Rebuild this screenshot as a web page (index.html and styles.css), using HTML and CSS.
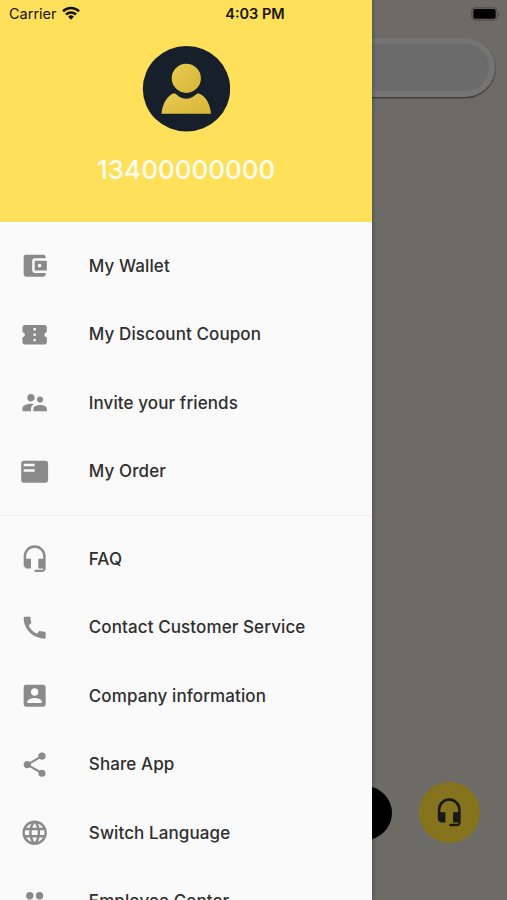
FILE: index.html
```html
<!DOCTYPE html>
<html lang="en">
<head>
  <meta charset="UTF-8" />
  <title>Menu</title>
  <link rel="stylesheet" href="styles.css">
</head>
<body>
<!-- Home screen behind the drawer -->
<main class="home">
  <div class="search"></div>
  <div class="actions">
    <div class="scan"></div>
    <div class="support">
      <svg viewBox="0 0 24 24"><path d="M12 1a9 9 0 0 0-9 9v7c0 1.66 1.34 3 3 3h3v-8H5v-2a7 7 0 0 1 14 0v2h-4v8h4v1h-6a1 1 0 0 0 0 2h5c1.66 0 3-1.34 3-3V10a9 9 0 0 0-9-9z"/></svg>
    </div>
  </div>
</main>

<aside class="drawer">
  <header class="profile">
    <svg class="avatar" viewBox="0 0 88 86">
      <defs>
        <linearGradient id="gold" x1="0" y1="0" x2="1" y2="1">
          <stop offset="0" stop-color="#e9cc50" />
          <stop offset="1" stop-color="#d6b538" />
        </linearGradient>
      </defs>
      <ellipse cx="44.5" cy="42.800" rx="43.700" ry="42.800" fill="#171f2b" />
      <circle cx="44.300" cy="32.300" r="14.600" fill="url(#gold)" />
      <path d="M19.500 67.800C20.500 57 26 48.500 32.500 47.300C35.500 49 38.500 52.800 44.300 52.800C49.500 52.800 53 49 56 47.300C63 49 68 57 69 67.800Z" fill="url(#gold)" />
    </svg>
    <div class="phone">13400000000</div>
  </header>

  <nav>
    <ul class="menu">
      <li><svg viewBox="0 0 24 24"><path d="M21 18v1c0 1.100-.9 2-2 2H5a2 2 0 0 1-2-2V5a2 2 0 0 1 2-2h14c1.100 0 2 .9 2 2v1h-9a2 2 0 0 0-2 2v8a2 2 0 0 0 2 2h9zm-9-2h10V8H12v8zm4-2.500a1.500 1.500 0 1 1 0-3 1.500 1.500 0 0 1 0 3z"/></svg><span>My Wallet</span></li>
      <li><svg viewBox="0 0 24 24"><path d="M22 10V6c0-1.110-.9-2-2-2H4c-1.100 0-1.990.890-1.990 2v4c1.100 0 1.990.9 1.990 2s-.890 2-2 2v4c0 1.100.9 2 2 2h16c1.100 0 2-.9 2-2v-4c-1.100 0-2-.9-2-2s.9-2 2-2zm-9 7.500h-2v-2h2v2zm0-4.500h-2v-2h2v2zm0-4.500h-2v-2h2v2z"/></svg><span>My Discount Coupon</span></li>
      <li><svg viewBox="0 0 24 24"><path d="M16.500 12c1.380 0 2.490-1.120 2.490-2.500S17.880 7 16.500 7a2.500 2.500 0 0 0 0 5zM9 11c1.660 0 2.990-1.340 2.990-3S10.660 5 9 5a3 3 0 0 0 0 6zm7.500 3c-1.830 0-5.500.920-5.500 2.750V19h11v-2.250c0-1.830-3.670-2.750-5.500-2.750zM9 13c-2.330 0-7 1.170-7 3.500V19h7v-2.250c0-.850.330-2.340 2.370-3.470C10.500 13.100 9.660 13 9 13z"/></svg><span>Invite your friends</span></li>
      <li><svg viewBox="0 0 24 24"><path d="M21 3H3c-1.100 0-2 .9-2 2v14c0 1.100.9 2 2 2h18c1.100 0 2-.9 2-2V5c0-1.100-.9-2-2-2zm-9 9H3v-2h9v2zm0-4.500H3v-2h9v2z"/></svg><span>My Order</span></li>
    </ul>
    <hr>
    <ul class="menu">
      <li><svg viewBox="0 0 24 24"><path d="M12 1a9 9 0 0 0-9 9v7c0 1.660 1.340 3 3 3h3v-8H5v-2a7 7 0 0 1 14 0v2h-4v8h4v1h-7v2h6c1.660 0 3-1.340 3-3V10a9 9 0 0 0-9-9z"/></svg><span>FAQ</span></li>
      <li><svg viewBox="0 0 24 24"><path d="M20.010 15.380c-1.230 0-2.420-.2-3.530-.560-.350-.120-.740-.030-1.010.240l-1.570 1.970c-2.830-1.350-5.480-3.900-6.890-6.830l1.950-1.660c.270-.280.350-.670.240-1.020-.370-1.110-.560-2.300-.560-3.530 0-.540-.450-.990-.990-.990H4.190C3.650 3 3 3.240 3 3.990 3 13.280 10.730 21 20.010 21c.710 0 .990-.630.990-1.180v-3.450c0-.540-.450-.990-.990-.990z"/></svg><span>Contact Customer Service</span></li>
      <li><svg viewBox="0 0 24 24"><path d="M3 5v14a2 2 0 0 0 2 2h14c1.100 0 2-.9 2-2V5c0-1.100-.9-2-2-2H5a2 2 0 0 0-2 2zm12 4a3 3 0 1 1-6 0 3 3 0 0 1 6 0zm-9 8c0-2 4-3.100 6-3.100s6 1.100 6 3.100v1H6v-1z"/></svg><span>Company information</span></li>
      <li><svg viewBox="0 0 24 24"><path d="M18 16.080c-.760 0-1.440.3-1.960.770L8.910 12.700c.050-.230.090-.460.090-.7s-.040-.470-.090-.7l7.050-4.110c.540.5 1.250.810 2.040.810a3 3 0 1 0-3-3c0 .240.040.470.090.7L8.040 9.810A3 3 0 1 0 6 15c.790 0 1.500-.310 2.040-.810l7.120 4.160c-.050.210-.080.430-.080.650a2.920 2.920 0 1 0 2.920-2.920z"/></svg><span>Share App</span></li>
      <li><svg viewBox="0 0 24 24"><path d="M11.990 2C6.470 2 2 6.480 2 12s4.470 10 9.990 10C17.520 22 22 17.520 22 12S17.520 2 11.990 2zm6.930 6h-2.950a15.650 15.650 0 0 0-1.380-3.560A8.030 8.030 0 0 1 18.920 8zM12 4.040c.830 1.200 1.480 2.530 1.910 3.960h-3.820c.430-1.430 1.080-2.760 1.910-3.960zM4.260 14C4.100 13.360 4 12.690 4 12s.1-1.360.260-2h3.380c-.080.660-.140 1.320-.140 2s.060 1.340.140 2H4.260zm.820 2h2.950c.320 1.250.780 2.450 1.380 3.560A7.990 7.990 0 0 1 5.080 16zm2.950-8H5.080a7.990 7.990 0 0 1 4.330-3.560A15.650 15.650 0 0 0 8.030 8zM12 19.960c-.830-1.200-1.480-2.530-1.910-3.960h3.820c-.430 1.430-1.080 2.760-1.910 3.960zM14.340 14H9.660c-.090-.660-.160-1.320-.160-2s.070-1.350.160-2h4.680c.090.650.160 1.320.160 2s-.070 1.340-.160 2zm.250 5.560c.6-1.110 1.060-2.310 1.380-3.560h2.950a8.030 8.030 0 0 1-4.330 3.560zM16.360 14c.080-.660.140-1.320.140-2s-.060-1.340-.140-2h3.380c.160.640.260 1.310.260 2s-.1 1.360-.260 2h-3.380z"/></svg><span>Switch Language</span></li>
      <li><svg viewBox="0 0 24 24"><path d="M16 11a3 3 0 1 0 0-6 3 3 0 0 0 0 6zm-8 0a3 3 0 1 0 0-6 3 3 0 0 0 0 6zm0 2c-2.330 0-7 1.170-7 3.500V19h14v-2.500C15 14.170 10.330 13 8 13zm8 0 1 3.500V19h6v-2.500c0-2.330-4.670-3.500-7-3.500z"/></svg><span>Employee Center</span></li>
    </ul>
  </nav>
</aside>

<div class="statusbar">
  <div class="carrier">
    <span>Carrier</span>
    <svg class="wifi" viewBox="0 0 18 14" fill="none" stroke="#161304" stroke-width="2.600">
      <path d="M1 5.200A11.600 11.600 0 0 1 17 5.200" />
      <path d="M4 8.500A7.400 7.400 0 0 1 14 8.500" />
      <path d="M9 13.700 6.100 10.700A4.200 4.200 0 0 1 11.900 10.700Z" fill="#161304" stroke="none" />
    </svg>
  </div>
  <div class="time">4:03 PM</div>
  <svg class="battery" viewBox="0 0 30 14">
    <rect x=".8" y=".8" width="25.500" height="12.400" rx="3.500" fill="none" stroke="#4a4945" />
    <rect x="2.300" y="2.100" width="22.400" height="9.700" rx="1.800" fill="#000" />
    <path d="M27.500 5Q29.600 7 27.500 9Z" fill="#4a4945" />
  </svg>
</div>
</body>
</html>
```

FILE: styles.css
```css
* {
  box-sizing: border-box;
}

html, body {
  margin: 0;
  height: 900px;
  overflow: hidden;
  font-family: Inter, "Liberation Sans", sans-serif;
}

body {
  position: relative;
}

.home {
  display: flex;
  flex-direction: column;
  justify-content: space-between;
  height: 900px;
  padding: 38px 12px 57px;
  background: #6d6b65;
}

.search {
  height: 59px;
  border: 6px solid #747474;
  border-radius: 30px;
  background: #6b6b6b;
  box-shadow: 0 1px 2px rgba(0, 0, 0, 0.6);
}

.actions {
  display: flex;
  justify-content: flex-end;
  align-items: center;
  gap: 27px;
  padding-right: 15px;
}

.scan {
  width: 54px;
  height: 54px;
  border-radius: 50%;
  background: #000;
}

.support {
  display: flex;
  align-items: center;
  justify-content: center;
  width: 61px;
  height: 61px;
  border-radius: 50%;
  background: #85731e;
}

.support svg {
  width: 30.500px;
  height: 30.500px;
  fill: #191918;
}

/* Drawer */
.drawer {
  position: absolute;
  top: 0;
  left: 0;
  width: 372.400px;
  height: 900px;
  overflow: hidden;
  background: #fafafa;
  box-shadow: 0 0 5px rgba(0, 0, 0, 0.35);
}

.profile {
  display: flex;
  flex-direction: column;
  align-items: center;
  height: 222px;
  padding-top: 46px;
  background: #ffe05a;
}

.avatar {
  width: 88px;
  height: 86px;
}

.phone {
  margin-top: 22px;
  font-size: 26px;
  line-height: 32px;
  font-weight: 500;
  color: #fffdf0;
}

nav {
  padding-top: 9.800px;
}

.menu {
  margin: 0;
  padding: 0;
  list-style: none;
}

.menu li {
  display: flex;
  align-items: center;
  gap: 39.500px;
  height: 68.400px;
  padding-left: 20px;
  font-size: 17px;
  font-weight: 500;
  letter-spacing: 0.100px;
  color: #2e2e2e;
  white-space: nowrap;
}

.menu svg {
  width: 29.300px;
  height: 29.300px;
  fill: #8a8a8a;
}

hr {
  height: 1px;
  margin: 9.500px 0 9px;
  border: 0;
  background: #eee;
}

/* Status bar */
.statusbar {
  position: absolute;
  top: 0;
  left: 0;
  display: grid;
  grid-template-columns: 1fr auto 1fr;
  align-items: center;
  width: 507px;
  height: 27px;
  padding: 0 6px 0 9px;
  font-size: 14.500px;
  color: #161304;
}

.carrier {
  display: flex;
  align-items: center;
  gap: 5px;
}

.wifi {
  width: 18px;
  height: 14px;
  margin-bottom: 2px;
}

.time {
  font-weight: 600;
}

.battery {
  justify-self: end;
  width: 30px;
  height: 14px;
}
```
